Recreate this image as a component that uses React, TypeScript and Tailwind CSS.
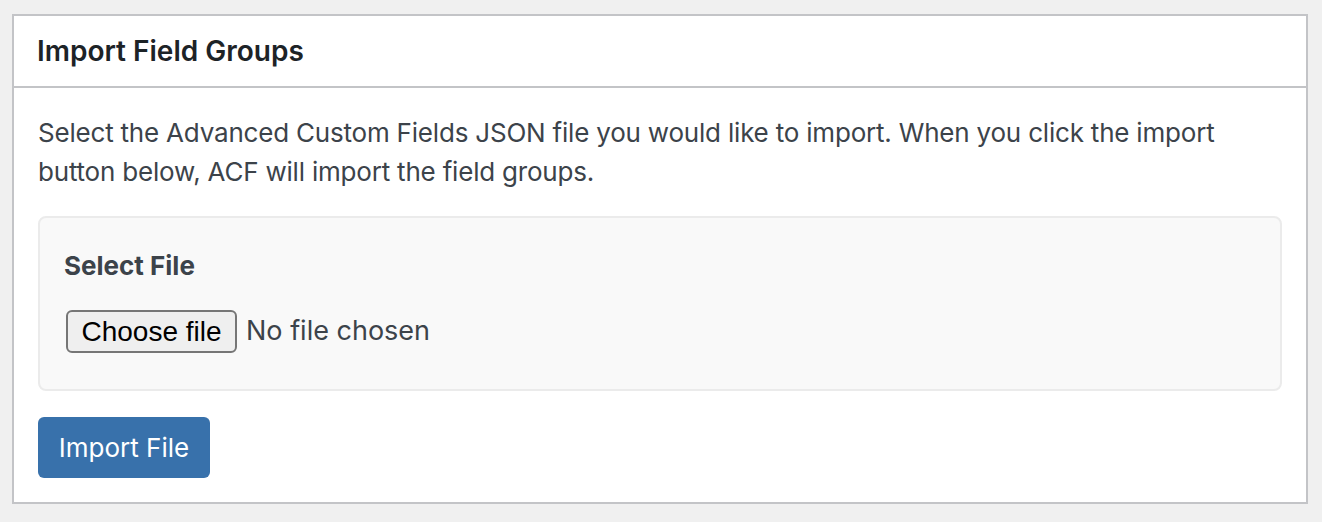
import React from "react";

export default function App() {
  return (
    <div className="w-[1322px] h-[522px] bg-[#f0f0f0] pt-[14px] pl-[12px] font-['Inter',sans-serif]">
      <div className="w-[1296px] h-[490px] bg-white border-2 border-[#c3c4c7] flex flex-col">
        <div className="h-[72px] border-b-2 border-[#c3c4c7] flex items-center px-[24px]">
          <h2 className="text-[28px] font-semibold text-[#1d2327] leading-[36px] -ml-[1px]">Import Field Groups</h2>
        </div>
        <div className="px-[24px] pt-[25px] flex flex-col">
          <p className="text-[26px] leading-[39px] text-[#3c434a] tracking-[-0.2px]">
            Select the Advanced Custom Fields JSON file you would like to import. When you click the import button below, ACF will import the field groups.
          </p>
          <div className="mt-[25px] h-[175px] bg-[#f9f9f9] border-2 border-[#ebebeb] rounded-[8px] px-[24px] pt-[28px]">
            <div className="text-[26px] leading-[39px] font-bold text-[#3c434a]">Select File</div>
            <div className="mt-[25px] flex items-center">
              <button className="ml-[2px] h-[43px] w-[171px] bg-[#efefef] border-2 border-[#767676] rounded-[6px] text-[28px] text-black font-['Liberation_Sans',Arial,sans-serif] leading-none">
                Choose file
              </button>
              <span className="ml-[9px] text-[27px] text-[#3c434a]">No file chosen</span>
            </div>
          </div>
          <div className="mt-[26px]">
            <button className="h-[61px] w-[172px] bg-[#3871ab] rounded-[6px] text-white text-[26px] leading-none">
              Import File
            </button>
          </div>
        </div>
      </div>
    </div>
  );
}
